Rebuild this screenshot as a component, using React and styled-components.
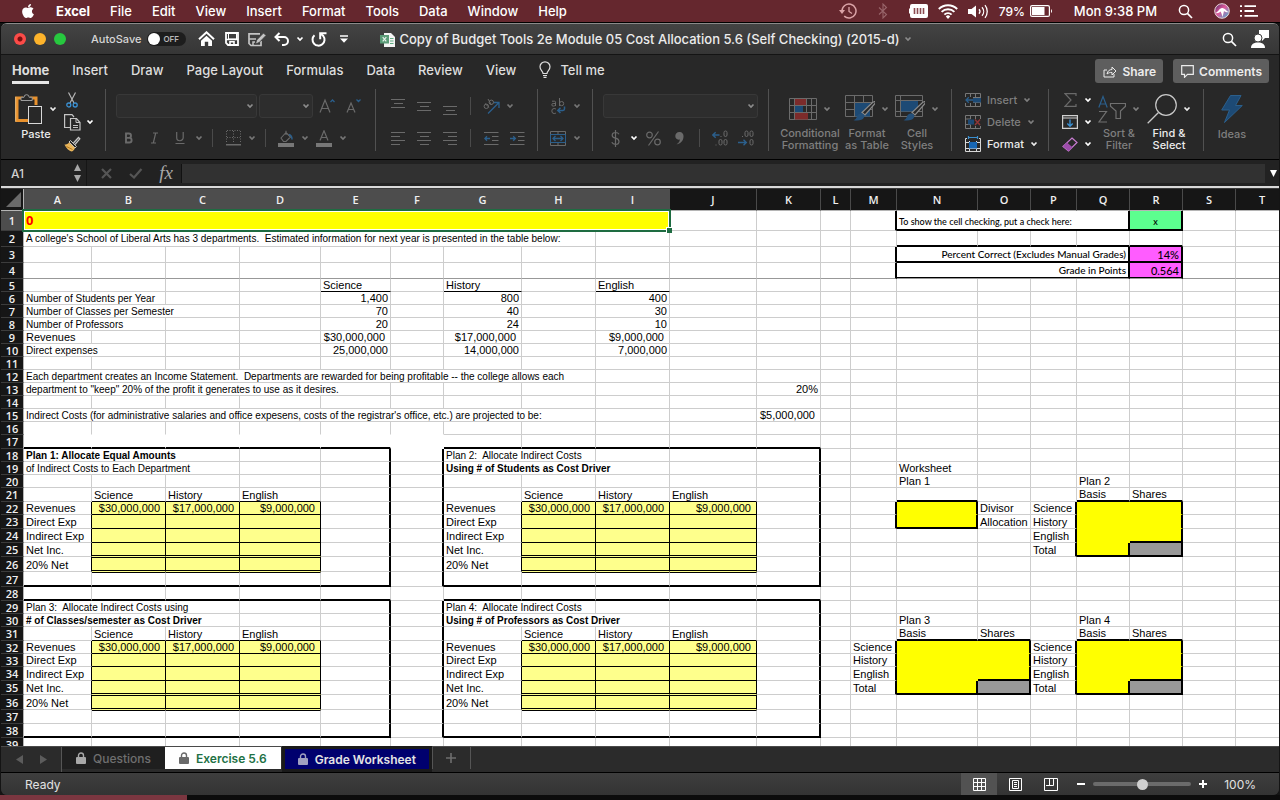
import React from "react";
import styled, { createGlobalStyle, css } from "styled-components";
import { FaApple } from "react-icons/fa";

const GlobalStyle = createGlobalStyle`
  * {
    box-sizing: border-box;
  }
  body {
    margin: 0;
    background: #141414;
    font-family: Inter, "Liberation Sans", sans-serif;
    color: #e2e2e2;
  }
  button,
  input,
  select {
    font: inherit;
    color: inherit;
    margin: 0;
    padding: 0;
    border: 0;
    background: none;
  }
  svg {
    display: block;
    flex: none;
  }
`;

const Screen = styled.div`
  height: 100vh;
  display: flex;
  flex-direction: column;
  overflow: hidden;
`;

/* ---------- menu bar ---------- */

const MenuBar = styled.nav`
  display: flex;
  align-items: center;
  flex: none;
  height: 23px;
  padding: 0 22px 0 20px;
  background: #65272e;
  border-bottom: 1px solid #000;
  color: #fff;
  font-size: 13px;
`;

const MenuList = styled.div`
  display: flex;
  align-items: center;
  gap: 20px;
  flex: 1;
`;

const MenuItem = styled.a`
  color: inherit;
  text-decoration: none;
  font-weight: ${(props) => (props.$app ? 700 : 500)};
`;

const MenuExtras = styled.div`
  display: flex;
  align-items: center;
  gap: 21px;
  font-weight: 500;
`;

const ExtrasCluster = styled.div`
  display: flex;
  align-items: center;
  gap: 10px;
`;

const Battery = styled.span`
  display: flex;
  align-items: center;
  gap: 5px;
  font-size: 12px;
`;

/* ---------- window ---------- */

const Window = styled.main`
  flex: 1;
  min-height: 0;
  display: flex;
  flex-direction: column;
  margin: 0 1px;
  overflow: hidden;
  background: #282828;
  border-top: 1px solid #8a8a8a;
  border-radius: 6px;
`;

const TitleBar = styled.header`
  display: flex;
  align-items: center;
  flex: none;
  height: 31px;
  padding: 0 7px 0 13px;
  background: linear-gradient(#434343, #363636);
  border-bottom: 1px solid #141414;
`;

const Lights = styled.div`
  display: flex;
  gap: 8px;
`;

const Light = styled.button`
  width: 12px;
  height: 12px;
  border-radius: 50%;
  background: ${(props) => props.$color};
`;

const AutoSave = styled.label`
  display: flex;
  align-items: center;
  gap: 6px;
  margin: 0 8px 0 25px;
  font-size: 11px;
  font-weight: 500;
  color: #d6d6d6;
`;

const Switch = styled.span`
  display: flex;
  align-items: center;
  gap: 3px;
  width: 39px;
  height: 14px;
  border-radius: 7px;
  background: #1d1d1d;
  font-size: 8px;
  font-weight: 600;
  color: #b8b8b8;

  input {
    appearance: none;
    width: 12px;
    height: 12px;
    margin-left: 1px;
    border-radius: 50%;
    background: #fff;
  }
`;

const QuickButton = styled.button`
  display: flex;
  justify-content: center;
  align-items: center;
  width: ${(props) => (props.$narrow ? 12 : props.$wide ? 36 : 25)}px;
  height: 24px;
  color: #fff;
`;

const DocTitle = styled.h1`
  display: flex;
  align-items: center;
  gap: 4px;
  flex: 1;
  margin: 0 0 0 24px;
  font-size: 13px;
  font-weight: 500;
  white-space: nowrap;
  color: #ececec;

  svg:last-child {
    color: #8a8a8a;
  }
`;

const TabRow = styled.div`
  display: flex;
  align-items: center;
  flex: none;
  height: 32px;
  padding: 0 10px 0 11px;
  font-size: 12px;
  font-weight: 600;
`;

const TabList = styled.div`
  display: flex;
  gap: 23px;
  flex: 1;
  font-size: 13px;
`;

const Tab = styled.button`
  display: flex;
  align-items: center;
  gap: 9px;
  height: 25px;
  color: #dedede;
  border-bottom: 3px solid ${(props) => (props.$active ? "#e6e6e6" : "transparent")};
  font-weight: ${(props) => (props.$active ? 700 : 500)};
`;

const ActionButton = styled.button`
  display: flex;
  align-items: center;
  justify-content: center;
  gap: 5px;
  height: 24px;
  padding: 0 7px 0 8px;
  margin-left: 10px;
  border-radius: 3px;
  background: #5e5e5e;
  color: #ececec;
`;

/* ---------- ribbon ---------- */

const Ribbon = styled.div`
  display: flex;
  flex: none;
  height: 73px;
  border-bottom: 1px solid #000;
`;

const Group = styled.section`
  display: flex;
  flex: none;
  width: ${(props) => props.$width}px;
  height: 62px;
  margin-top: 2px;
  padding-left: ${(props) => props.$pad || 9}px;
  border-right: ${(props) => (props.$last ? 0 : 1)}px solid #515151;
`;

const Stack = styled.div`
  display: flex;
  flex-direction: column;
  justify-content: ${(props) => (props.$tight ? "flex-start" : "space-between")};
  padding-top: ${(props) => (props.$tight ? 0 : 4)}px;
`;

const Line = styled.div`
  display: flex;
  align-items: center;
  flex: none;
  height: ${(props) => (props.$tight ? 22 : 26)}px;
`;

const Tool = styled.button`
  display: flex;
  justify-content: center;
  align-items: center;
  width: ${(props) => (props.$narrow ? 24 : 26)}px;
  height: 22px;
  color: ${(props) => (props.$on ? "#d0d0d0" : "#6a6a6a")};
`;

const Drop = styled.button`
  display: flex;
  justify-content: center;
  align-items: center;
  width: 12px;
  height: 22px;
  color: ${(props) => (props.$on ? "#fff" : "#767676")};
`;

const Divider = styled.span`
  width: 1px;
  height: 18px;
  margin: 0 7px;
  background: #4a4a4a;
`;

const Picker = styled.div`
  display: grid;
  align-items: center;
  width: ${(props) => props.$width}px;
  height: 24px;
  margin: 0 1px;
  border: 1px solid #383838;
  border-radius: 3px;
  background: #2d2d2d;
  color: #8c8c8c;

  > * {
    grid-area: 1 / 1;
  }
  select {
    appearance: none;
    width: 100%;
    height: 100%;
  }
  svg {
    justify-self: end;
    margin-right: 2px;
    pointer-events: none;
  }
`;

const BigTool = styled.button`
  display: flex;
  flex-direction: column;
  align-items: center;
  width: ${(props) => props.$width}px;
  padding-top: 4px;
  font-size: 11px;
  line-height: 12px;
  font-weight: 500;
  white-space: nowrap;
  color: ${(props) => (props.$on ? "#ececec" : "#7f7f7f")};
`;

const BigIcon = styled.span`
  display: flex;
  align-items: center;
  gap: 6px;
  height: 32px;
  margin-bottom: 3px;
`;

const CellTool = styled.button`
  display: flex;
  align-items: center;
  flex: none;
  gap: 6px;
  height: 22px;
  font-size: 11px;
  font-weight: 500;
  color: ${(props) => (props.$on ? "#ececec" : "#7f7f7f")};
`;

/* ---------- formula bar ---------- */

const FormulaBar = styled.div`
  display: flex;
  align-items: center;
  flex: none;
  height: 26px;
  background: #222;
`;

const NameBox = styled.div`
  display: flex;
  align-items: center;
  width: 86px;
  height: 26px;
  margin-right: 4px;
  padding: 0 5px 0 10px;
  border-right: 1px solid #161616;
  color: #d0d0d0;

  input {
    flex: 1;
    min-width: 0;
    font-size: 12px;
    font-weight: 500;
  }
`;

const Stepper = styled.span`
  display: flex;
  flex-direction: column;
  gap: 4px;
  color: #a8a8a8;
`;

const FormulaButton = styled.button`
  display: flex;
  justify-content: center;
  align-items: center;
  width: 30px;
  height: 22px;
  color: ${(props) => (props.$on ? "#a8a8a8" : "#555")};
  font-family: "Liberation Serif", serif;
  font-size: 19px;
  font-style: italic;
`;

const FormulaInput = styled.input`
  flex: 1;
  min-width: 0;
  height: 19px;
  margin-right: 2px;
  background: #313131;
  border-left: 1px solid #111;
`;

/* ---------- grid ---------- */

const GRID = "#cdcdcd";
const PALE = "#feff8c";

const Sheet = styled.div`
  flex: 1;
  min-height: 0;
  overflow: hidden;
  padding-top: 1px;
  background: #3a3a3a;
  border-top: 2px solid #d8d8d8;
`;

const Grid = styled.table`
  width: 100%;
  table-layout: fixed;
  border-collapse: separate;
  border-spacing: 0;
  color: #000;
  font-family: "Liberation Sans", Arial, sans-serif;
  font-size: 11px;
  line-height: 11px;
`;

const Row = styled.tr`
  height: ${(props) => props.$height}px;
`;

const Heading = styled.th`
  padding: 0;
  background: ${(props) => (props.$picked ? "#4d4d4d" : "#161616")};
  color: #f0f0f0;
  font-family: "Open Sans", "Noto Sans", sans-serif;
  font-size: 11px;
  font-weight: 600;
  vertical-align: middle;
  ${(props) =>
    props.scope === "col"
      ? css`
          border-right: 1px solid ${props.$picked ? "#4d4d4d" : "#4a4a4a"};
          border-bottom: 1px solid #b5b5b5;
        `
      : css`
          border-right: 1px solid #b5b5b5;
          border-bottom: 1px solid #3c3c3c;
        `}
`;

const Corner = styled.td`
  padding: 0 2px 3px 0;
  background: #161616;
  border-right: 1px solid #b5b5b5;
  border-bottom: 1px solid #b5b5b5;
  vertical-align: bottom;

  svg {
    margin-left: auto;
  }
`;

const lineStyle = (line, fill) => {
  if (line === "thick") return "2px solid #000";
  if (line === "thin") return "1px solid #000";
  if (line === "freeze" || line === "boxFreeze") return "1px solid #989898";
  if (line === "double") return `1px solid ${PALE}`;
  if (line === "none") return `1px solid ${fill || "#fff"}`;
  return `1px solid ${fill || GRID}`;
};

const faces = {
  prose: css`
    font-size: 10px;
  `,
  title: css`
    position: relative;
    color: #f00;
    font-family: "Open Sans", sans-serif;
    font-size: 13px;
    line-height: 17px;
  `,
  note: css`
    font: 500 9px/15px Lato, sans-serif;
    vertical-align: bottom;
  `,
  score: css`
    font: 500 10px/13px Lato, sans-serif;
  `,
  points: css`
    font: 500 11px/13px Lato, sans-serif;
  `,
};

const Cell = styled.td`
  padding: 0 2px;
  background: ${(props) => props.$fill || "#fff"};
  border-right: ${(props) => lineStyle(props.$right, props.$fill)};
  border-bottom: ${(props) => lineStyle(props.$bottom, props.$fill)};
  border-top: ${(props) => (props.$top ? "1px solid #000" : 0)};
  text-align: ${(props) => props.$align || "left"};
  vertical-align: ${(props) => (props.$middle ? "middle" : "bottom")};
  white-space: pre;
  ${(props) => props.$money && "padding-right: 5px;"}
  ${(props) => props.$bold && "font-weight: 700;"}
  ${(props) =>
    (props.$bottom === "double" || props.$bottom === "boxFreeze") &&
    "box-shadow: inset 0 -1px 0 #000;"}
  ${(props) => faces[props.$face]}
`;

const Selection = styled.span`
  position: absolute;
  inset: -2px;
  border: 2px solid #1e6c41;
  box-shadow: inset 0 0 0 1px #fff;

  &::after {
    content: "";
    position: absolute;
    right: -3px;
    bottom: -3px;
    width: 5px;
    height: 5px;
    background: #1e6c41;
    box-shadow: -1px -1px 0 #fff;
  }
`;

/* ---------- sheet tabs and status ---------- */

const SheetTabs = styled.div`
  display: flex;
  flex: none;
  height: 27px;
  background: #2b2b2b;
  border-top: 1px solid #4a4a4a;
  border-bottom: 1px solid #000;
`;

const TabArrows = styled.div`
  display: flex;
  align-items: center;
  width: 61px;
  padding-left: 6px;
  border-right: 1px solid #555;
`;

const TabArrow = styled.button`
  display: flex;
  align-items: center;
  justify-content: center;
  width: 24px;
  height: 22px;
  color: #5c5c5c;
`;

const sheetTabLook = {
  dim: css`
    background: #1f1f1f;
    color: #6f6f6f;
    font-weight: 500;
  `,
  open: css`
    background: #fff;
    color: #1e7145;
    font-weight: 600;
  `,
  navy: css`
    background: #00006e;
    color: #e4e4e4;
    font-weight: 600;
    outline: 3px solid #1a1a1a;
    margin: 2px 3px 0 4px;
  `,
};

const SheetTab = styled.button`
  display: flex;
  align-items: center;
  gap: 7px;
  height: ${(props) => (props.$look === "navy" ? 20 : 22)}px;
  padding: 0 ${(props) => (props.$look === "navy" ? 13 : 14)}px;
  font-size: 12px;
  white-space: nowrap;
  ${(props) => sheetTabLook[props.$look]}
`;

const AddTab = styled.button`
  display: flex;
  align-items: center;
  justify-content: center;
  width: 39px;
  height: 22px;
  border-left: 1px solid #555;
  border-right: 1px solid #555;
  color: #6e6e6e;
`;

const StatusBar = styled.footer`
  display: flex;
  align-items: center;
  flex: none;
  height: 22px;
  padding: 0 23px 0 24px;
  background: linear-gradient(#3e3e3e, #333);
  font-size: 12px;
`;

const StatusText = styled.span`
  flex: 1;
`;

const ViewButton = styled.button`
  display: flex;
  align-items: center;
  justify-content: center;
  width: 36px;
  height: 22px;
  background: ${(props) => (props.$active ? "#525252" : "none")};
  color: #fff;
`;

const ZoomButton = styled.button`
  display: flex;
  align-items: center;
  justify-content: center;
  width: 24px;
  height: 22px;
  color: #fff;
`;

const ZoomSlider = styled.input`
  appearance: none;
  width: 98px;
  height: 4px;
  border-radius: 2px;
  background: #6b6b6b;

  &::-webkit-slider-thumb {
    appearance: none;
    width: 11px;
    height: 11px;
    border-radius: 50%;
    background: #cfcfcf;
  }
`;

const ZoomValue = styled.output`
  margin-left: 9px;
`;

const Desktop = styled.div`
  flex: none;
  height: 5px;
  background: linear-gradient(90deg, #7b3640 0 187px, #0c0c0c 187px);
`;

/* ---------- icons ---------- */

const Icon = ({ w = 16, h = 16, box, children }) => (
  <svg
    width={w}
    height={h}
    viewBox={box || `0 0 ${w} ${h}`}
    fill="none"
    stroke="currentColor"
    aria-hidden="true"
  >
    {children}
  </svg>
);

const Chevron = () => (
  <Icon w={8} h={6}>
    <path d="M1.5 1.5 4 4l2.5-2.5" strokeWidth="1.7" />
  </Icon>
);

const BLUE = "#2b5f8c";

const LockIcon = ({ color }) => (
  <Icon w={10} h={12}>
    <rect x="0" y="5" width="10" height="7" rx="1" fill={color} stroke="none" />
    <path d="M2.5 6V3.500a2.500 2.500 0 0 1 5 0V6" stroke={color} strokeWidth="1.400" />
  </Icon>
);

const SearchIcon = () => (
  <Icon w={15} h={15}>
    <circle cx="6" cy="6" r="4.600" strokeWidth="1.500" />
    <path d="m9.400 9.400 4.600 4.600" strokeWidth="1.700" />
  </Icon>
);

const TimeMachineIcon = () => (
  <Icon w={18} h={16}>
    <path d="M3 8a7 7 0 1 1 2.200 5.100" stroke="#dba4a8" strokeWidth="1.500" />
    <path d="M0 7h6L3 11z" fill="#dba4a8" stroke="none" />
    <path d="M10 4v4.500l3 2" stroke="#dba4a8" strokeWidth="1.300" />
  </Icon>
);

const BluetoothIcon = () => (
  <Icon w={10} h={16}>
    <path d="m1 4.500 7.500 7L5 15V1l3.500 3.500-7.500 7" stroke="#98656a" strokeWidth="1.100" />
  </Icon>
);

const MemoryIcon = () => (
  <Icon w={19} h={14}>
    <path d="M3 0h14a2 2 0 0 1 2 2v10a2 2 0 0 1-2 2H3a2 2 0 0 1-2-2V9.500H0v-5h1V2a2 2 0 0 1 2-2z" fill="#fff" stroke="none" />
    <path d="M5.500 4v6M8.500 4v6M11.500 4v6M14.500 4v6" stroke="#8c4a50" strokeWidth="1.600" />
  </Icon>
);

const WifiIcon = () => (
  <Icon w={20} h={15}>
    <path d="M.8 5a13 13 0 0 1 18.400 0M3.600 7.900a9 9 0 0 1 12.800 0M6.400 10.700a5 5 0 0 1 7.200 0" strokeWidth="1.900" />
    <path d="m10 15-2.200-2.600a3 3 0 0 1 4.400 0z" fill="#fff" stroke="none" />
  </Icon>
);

const SoundIcon = () => (
  <Icon w={21} h={15}>
    <path d="M0 5h3.500L8 1.500v12L3.500 10H0z" fill="#fff" stroke="none" />
    <path d="M11 5.200a3.500 3.500 0 0 1 0 4.600M14 3.200a6.500 6.500 0 0 1 0 8.600M17 1.200a10 10 0 0 1 0 12.600" strokeWidth="1.300" />
  </Icon>
);

const BatteryIcon = () => (
  <Icon w={23} h={12}>
    <rect x=".6" y=".6" width="18.800" height="10.800" rx="1.500" strokeWidth="1.200" />
    <rect x="2" y="2" width="12.500" height="8" fill="#fff" stroke="none" />
    <path d="M21 4v4a2.500 2.500 0 0 0 0-4z" fill="#fff" stroke="none" />
  </Icon>
);

const SiriIcon = () => (
  <Icon w={16} h={16}>
    <defs>
      <linearGradient id="siri" x1="0" y1="0" x2="1" y2="1">
        <stop offset="0" stopColor="#4a2a66" />
        <stop offset=".45" stopColor="#e0589a" />
        <stop offset="1" stopColor="#38b6d8" />
      </linearGradient>
    </defs>
    <circle cx="8" cy="8" r="7.300" fill="url(#siri)" stroke="#e8d5d8" strokeWidth="1" />
    <path d="M1.500 10C4.500 9 5.500 4.500 8.500 5s3.500 3 6 4c-2.500.500-3.500 0-4.500-1-.500 2-1 4-1.500 6-.500-2-1-4-2-5.500-1.500 1.500-3 2-5 1.500z" fill="#fff" stroke="none" />
  </Icon>
);

const ListIcon = () => (
  <Icon w={18} h={12}>
    <path d="M0 1.200h2M4.500 1.200H16M0 6h2M4.500 6H14M0 10.800h2M4.500 10.800H18" strokeWidth="1.800" />
  </Icon>
);

const HomeIcon = () => (
  <Icon w={17} h={16}>
    <path d="M1 8.300 8.500 1.300l7.500 7" strokeWidth="2" />
    <path d="M3 9.800 8.500 4.700 14 9.800V15h-3.800v-4.200H6.800V15H3z" fill="#fff" stroke="none" />
  </Icon>
);

const SaveIcon = () => (
  <Icon w={14} h={14}>
    <path d="M1 1h12v12H3l-2-2z" strokeWidth="1.800" />
    <path d="M1.500 1.500h2V7h8V1.500" strokeWidth="1" />
    <path d="M1 7.500h12" strokeWidth="1.600" />
    <path d="M5 13V9.800h4V13" strokeWidth="1.600" />
  </Icon>
);

const SaveAsIcon = () => (
  <Icon w={18} h={15}>
    <path d="M12 1.800H1v9.700L3 13.500h10V9" stroke="#c4c4c4" strokeWidth="1.700" />
    <path d="M1 7h7M5 13v-3h2" stroke="#c4c4c4" strokeWidth="1.500" />
    <path d="m7.500 12 1.200-4L15.500 1l2.500 2.500-6.800 7z" fill="#c4c4c4" stroke="#3c3c3c" strokeWidth=".8" />
  </Icon>
);

const UndoIcon = () => (
  <Icon w={16} h={14}>
    <path d="M5.500 1 1.500 5l4 4" strokeWidth="2" />
    <path d="M1.500 5H10a4 4 0 0 1 0 8H8" strokeWidth="2" />
  </Icon>
);

const RedoIcon = () => (
  <Icon w={16} h={15}>
    <path d="M3.500 3.200A6 6 0 1 0 12.300 4L9.500 1.500" strokeWidth="2" />
    <path d="M15.500 1.200H9.200v6" strokeWidth="2" />
  </Icon>
);

const MoreIcon = () => (
  <Icon w={8} h={8}>
    <path d="M0 1h8" strokeWidth="1.400" />
    <path d="M0 3.500h8L4 7.800z" fill="#fff" stroke="none" />
  </Icon>
);

const FileIcon = () => (
  <Icon w={15} h={15}>
    <path d="M4 1h7l4 4v10H4z" fill="#f4f4f4" stroke="none" />
    <path d="M10 6.500h3.500M10 9h3.500M10 11.500h3.500" stroke="#5fae83" />
    <rect x="0" y="3" width="9" height="8.500" fill="#5b9c78" stroke="none" />
    <path d="m2.700 5.200 3.600 4.200M6.300 5.200 2.700 9.400" stroke="#e6f2ea" strokeWidth="1.200" />
  </Icon>
);

const PersonIcon = () => (
  <Icon w={18} h={18}>
    <path d="M8 0h10v8h-4l-3 3V8H8z" fill="#fff" stroke="none" />
    <circle cx="7" cy="8" r="4" fill="#fff" stroke="#3c3c3c" />
    <path d="M0 18c0-4 3-5.500 7-5.500s7 1.500 7 5.500z" fill="#fff" stroke="none" />
  </Icon>
);

const BulbIcon = () => (
  <Icon w={12} h={17}>
    <path d="M4 12.500c0-2.500-3-3-3-6.700a5 5 0 0 1 10 0c0 3.700-3 4.200-3 6.700zM4 14.500h4M4.500 16.300h3" strokeWidth="1.200" />
  </Icon>
);

const ShareIcon = () => (
  <Icon w={14} h={13}>
    <path d="M4 5H1v7h10V9" />
    <path d="M4 9c.5-3 2.500-4.500 5-4.500V2l4 4-4 4V7.500C7 7.300 5.500 7.800 4 9z" />
  </Icon>
);

const CommentIcon = () => (
  <Icon w={13} h={13}>
    <path d="M.7.7h11.600v8.600H6.500l-3 3v-3H.7z" strokeWidth="1.200" />
  </Icon>
);

const PasteIcon = () => (
  <Icon w={28} h={32}>
    <path d="M8 5H2v22.500h11" stroke="#e8912d" strokeWidth="3" />
    <path d="M15 5h6v7" stroke="#e8912d" strokeWidth="3" />
    <path d="M.7 28.700V3.700" stroke="#f3c27a" />
    <path d="M6 7.500V4.300h3a2.600 2.600 0 0 1 5.200 0h3v3.200z" fill="#282828" stroke="#9c9c9c" />
    <rect x="13.500" y="13.500" width="13" height="17" fill="#282828" stroke="#d8d8d8" />
  </Icon>
);

const CutIcon = () => (
  <Icon w={12} h={16}>
    <path d="M2.500.5 8 11M9.500.5 4 11" stroke="#b4b4b4" strokeWidth="1.200" />
    <circle cx="2.800" cy="13" r="2" stroke="#3a8fd0" strokeWidth="1.300" />
    <circle cx="9.200" cy="13" r="2" stroke="#3a8fd0" strokeWidth="1.300" />
  </Icon>
);

const CopyIcon = () => (
  <Icon w={17} h={17}>
    <path d="M6 13.500H.6V.6H8L10 3" stroke="#c4c4c4" strokeWidth="1.200" />
    <path d="M6.500 4.500h6l3.500 4v7.500H6.500z" fill="#282828" stroke="#c4c4c4" strokeWidth="1.200" />
    <path d="M12 4.500v4h4M9 11.500h5M9 13.500h5" stroke="#c4c4c4" />
  </Icon>
);

const BrushIcon = () => (
  <Icon w={17} h={16}>
    <path d="m9.500 7 5-5.500 1.300 1.300L11 8.500" stroke="#c4c4c4" strokeWidth="1.300" />
    <path d="m6.500 4.500 6 6-1.500 1.500-6-6z" fill="#282828" stroke="#c4c4c4" />
    <path d="M5 6.500c-1 1.500-2.500 2-4.500 2C2 12 5 15 8 15.500c1.500-1 2.500-2 3-3.500z" fill="#e8b45a" stroke="none" />
    <path d="m2.500 10.500 6 3" stroke="#b87a1e" />
  </Icon>
);

const FontSizeIcon = ({ up }) => (
  <Icon w={16} h={16}>
    <path d={up ? "M1 14.500 6 2l5 12.500M2.800 10.500h6.400" : "M2 14.500 6 5l4 9.500M3.300 11.500h5.400"} strokeWidth="1.200" />
    <path d={up ? "m11.500 4 2-2 2 2" : "m11.500 1.500 2 2 2-2"} stroke={BLUE} strokeWidth="1.300" />
  </Icon>
);

const BoldIcon = () => (
  <Icon w={9} h={12}>
    <path d="M2 1.500h2.800a2.200 2.200 0 0 1 0 4.400H2zM2 5.900h3.300a2.300 2.300 0 0 1 0 4.600H2z" strokeWidth="1.900" />
  </Icon>
);

const ItalicIcon = () => (
  <Icon w={9} h={12}>
    <path d="M3 1h5M1 11h5M5.700 1 3.300 11" strokeWidth="1.200" />
  </Icon>
);

const UnderlineIcon = () => (
  <Icon w={10} h={14}>
    <path d="M1.700 1v5.500a3.200 3.200 0 0 0 6.500 0V1M.5 12.500h9" strokeWidth="1.200" />
  </Icon>
);

const BordersIcon = () => (
  <Icon w={15} h={16}>
    <path d="M.5 1v12M14.500 1v12M7.500 1v12M1 .5h13M1 7.500h13" strokeDasharray="1 1.500" />
    <path d="M0 14.700h15" strokeWidth="1.400" />
  </Icon>
);

const FillIcon = () => (
  <Icon w={16} h={17}>
    <path d="m3 8 5-5.500L12.500 7 8 11.500H5.500zM8 5V.8" strokeWidth="1.100" />
    <path d="M11 4.500c2 .5 3 2 3 5" stroke={BLUE} strokeWidth="1.500" />
    <rect x="0" y="13" width="16" height="4" fill="#777" stroke="none" />
  </Icon>
);

const FontColorIcon = () => (
  <Icon w={16} h={17}>
    <path d="M4 10.500 8 .8l4 9.700M5.400 7.500h5.200" strokeWidth="1.200" />
    <rect x="0" y="13" width="16" height="4" fill="#777" stroke="none" />
  </Icon>
);

const linePaths = {
  top: "M0 2.500h14M3 6.500h9M0 10.500h14",
  middle: "M0 5.500h14M3 9.500h9M0 13.500h14",
  bottom: "M0 9.500h14M3 13.500h9M0 17.500h14",
  left: "M0 1.500h14M0 5.500h9M0 9.500h14M0 13.500h9",
  center: "M0 1.500h14M3 5.500h9M0 9.500h14M3 13.500h9",
  right: "M0 1.500h14M5 5.500h9M0 9.500h14M5 13.500h9",
};

const LinesIcon = ({ kind }) => {
  const tall = ["top", "middle", "bottom"].includes(kind);
  return (
    <Icon w={14} h={tall ? 18 : 15}>
      <path d={linePaths[kind]} />
    </Icon>
  );
};

const OrientIcon = () => (
  <Icon w={17} h={16}>
    <path d="M5 15.500 15.500 5M10.500 4.500H16V10" stroke={BLUE} strokeWidth="1.300" />
    <circle cx="3.300" cy="8.300" r="2.200" />
    <path d="m2 5.500 4.200 4" />
    <circle cx="8.300" cy="4.300" r="2.200" />
    <path d="m5 1 3.500 6" />
  </Icon>
);

const IndentIcon = ({ out }) => (
  <Icon w={15} h={15}>
    <path d="M0 1.500h14.500M8 5.500h6.500M8 9.500h6.500M0 13.500h14.500" />
    <path d={out ? "M6 7.500H1M3 5.200.8 7.500 3 9.800" : "M0 7.500h5M3.200 5.200l2.200 2.300-2.200 2.300"} stroke={BLUE} strokeWidth="1.300" />
  </Icon>
);

const WrapIcon = () => (
  <Icon w={15} h={17}>
    <path d="M1 3.200h2.500q1 0 1 1V8M4.500 5.500H2.200q-1.400 0-1.400 1.300t1.400 1.300q1.500 0 2.300-1.200M8.500 0v8" />
    <circle cx="10.600" cy="5.600" r="2.100" />
    <path d="M5 11.200Q4.300 10.500 3.200 10.500.8 10.500.8 13t2.400 2.600q1.100 0 1.800-.7" />
    <path d="M13.500 8.500v2.300q0 1.700-1.500 1.700H7M9.500 9.800 6.800 12.500 9.500 15" stroke={BLUE} strokeWidth="1.500" />
  </Icon>
);

const MergeIcon = () => (
  <Icon w={16} h={15}>
    <path d="M.5.500h15v14H.5zM8 .5V4M8 11v3.500" />
    <path d="M.5 3.500h15v8H.5z" stroke={BLUE} />
    <path d="M3 7.500h10M5.500 5 3 7.500 5.500 10M10.500 5 13 7.500 10.500 10" stroke={BLUE} strokeWidth="1.300" />
  </Icon>
);

const DollarIcon = () => (
  <Icon w={9} h={17}>
    <path d="M4.500 0v17M8 4.300Q7 2.500 4.500 2.500 1.200 2.500 1.200 5.200q0 2.300 3.300 3T8 11.500q0 2.900-3.500 2.900Q1.800 14.400.8 12.300" strokeWidth="1.200" />
  </Icon>
);

const PercentIcon = () => (
  <Icon w={15} h={15}>
    <circle cx="3.500" cy="4" r="2.800" strokeWidth="1.200" />
    <circle cx="11.500" cy="11" r="2.800" strokeWidth="1.200" />
    <path d="M12.500.500 2.500 14.500" strokeWidth="1.200" />
  </Icon>
);

const CommaIcon = () => (
  <Icon w={9} h={13}>
    <path d="M4.200 0A4 4 0 0 1 8.500 4.500C8.500 9 5.500 11.500 1.500 12.500c2-1.500 3.300-3 3.300-5C2 8.200.3 6.300.3 4A3.900 3.900 0 0 1 4.200 0z" fill="currentColor" stroke="none" />
  </Icon>
);

const DecimalIcon = ({ less }) => (
  <Icon w={16} h={16}>
    <rect x="12" y="1" width="3" height="5.500" rx="1.500" />
    {less && <rect x="7" y="1" width="3" height="5.500" rx="1.500" />}
    <rect x="12" y="9.500" width="3" height="5.500" rx="1.500" />
    {!less && <rect x="7" y="9.500" width="3" height="5.500" rx="1.500" />}
    <path d={less ? "M4.500 6v1" : "M4 14.500v1M9 6v1"} />
    <path d={less ? "M0 12.500h8M5.500 9.800 8.300 12.500l-2.800 2.700" : "M7.500 5H1M3.700 2.200.8 5l2.900 2.800"} stroke={BLUE} strokeWidth="1.400" />
  </Icon>
);

const PaintBrush = () => (
  <>
    <path d="M29.500 6.500c1 0 1 1 .5 2L20 20l-3-2.500L27.500 7.500z" fill="#282828" stroke="#8a8a8a" strokeWidth="1.200" />
    <path d="M16.500 18.500c2 0 3.500 2 2.500 4-1.500 3-6 3.500-10.500 2.700 3-1.200 3-3 4-5 .8-1.200 2-1.700 4-1.700z" fill="#24507a" stroke="none" />
  </>
);

const ConditionalIcon = () => (
  <Icon w={28} h={24}>
    <path d="M.5 1.500h27v21H.5zM.5 8.500h27M.5 15.500h27M5.500 1.500v21M17.500 1.500v21M22.500 1.500v21" stroke="#6b6b6b" />
    <path d="M6 2h11v6H6zM6 16h13v6.500H6z" fill="#7c2b2b" stroke="none" />
    <rect x="6" y="9" width="8" height="6" fill="#1d4a75" stroke="none" />
    <rect x="14" y="9" width="3" height="6" fill="#282828" stroke="none" />
  </Icon>
);

const FormatTableIcon = () => (
  <Icon w={30} h={27}>
    <path d="M.5.500h27v21H.5zM.5 7.500h27M.5 14.500h27M9.500.5v21M18.500.5v21" stroke="#6b6b6b" />
    <path d="M10 8h15v13.500H10z" fill="#1d4a75" stroke="none" />
    <PaintBrush />
  </Icon>
);

const CellStylesIcon = () => (
  <Icon w={30} h={27}>
    <path d="M.5.500h27v21H.5zM.5 5.500h27M.5 16.500h27M5.500.5v21" stroke="#6b6b6b" />
    <path d="M6 6h17v10.500H6z" fill="#1d4a75" stroke="none" />
    <PaintBrush />
  </Icon>
);

const InsertCellsIcon = () => (
  <Icon w={16} h={14}>
    <path d="M.5 4V.500h15v13H.5V10M5.500.5V4M10.500.5v13M5.500 10v3.500M8 9.500h7.500M8 4.500h7.500" stroke="#777" />
    <rect x="8" y="5" width="8" height="4.500" fill="#1d4a75" stroke="none" />
    <path d="M8 7H1M3.800 4.200 1 7l2.800 2.800" stroke={BLUE} strokeWidth="1.300" />
  </Icon>
);

const DeleteCellsIcon = () => (
  <Icon w={16} h={14}>
    <path d="M.5.500h15V4M.5.500V4h5V.5M10.500.5V4M.5 13.500V9.500h5v4zM5.500 13.500h10V11M10.500 11v2.500M.5 4v6" stroke="#777" />
    <rect x="3" y="4.500" width="6" height="5" fill="#1d4a75" stroke="none" />
    <path d="m10 4.500 5 5.500M15 4.500 10 10" stroke="#8f3535" strokeWidth="1.500" />
  </Icon>
);

const FormatCellsIcon = () => (
  <Icon w={16} h={16}>
    <path d="M3.500 1.500h9M3.500 0v3M12.500 0v3" stroke="#3a8fd0" strokeWidth="1.200" />
    <path d="M2 2.500H.5v13h15v-13H14M4.500 5v10.500M11.500 5v10.500M.5 6.500h15M.5 12.500h15" stroke="#d8d8d8" />
    <rect x="4" y="6" width="8" height="6.500" fill="#1766b3" stroke="none" />
  </Icon>
);

const SumIcon = () => (
  <Icon w={13} h={14}>
    <path d="M12 3V.700H1l6 6.300-6 6.300h11V11" strokeWidth="1.200" />
  </Icon>
);

const FillDownIcon = () => (
  <Icon w={16} h={14}>
    <path d="M.6.600h14.800v12.800H.6zM.6 3h14.800" strokeWidth="1.200" />
    <path d="M8 4.500V11M5.300 8.500 8 11.200l2.700-2.700" stroke="#3a8fd0" strokeWidth="1.400" />
  </Icon>
);

const EraserIcon = () => (
  <Icon w={16} h={15}>
    <path d="M10 1 15 5.500 6.500 14 1 9.500z" stroke="#c77bd0" strokeWidth="1.200" />
    <path d="M5 5.500 10.500 10.200 6.500 14 1 9.500z" fill="#9d4cab" stroke="none" />
  </Icon>
);

const SortIcon = () => (
  <Icon w={28} h={28}>
    <path d="M.8 12.500 5 1.500l4.200 11M2.300 9h5.400" stroke={BLUE} strokeWidth="1.200" />
    <path d="M1 16.500h7.500L1 27h8" stroke="#707070" strokeWidth="1.200" />
    <path d="M12.500 8.500h15v2.800L22.500 16v7.500h-4.500V16l-5.500-4.700z" stroke="#707070" strokeWidth="1.200" />
  </Icon>
);

const FindIcon = () => (
  <Icon w={30} h={30}>
    <circle cx="19" cy="11" r="10.300" stroke="#c8c8c8" strokeWidth="1.200" />
    <path d="M11.500 18.500.7 29.300" stroke="#c8c8c8" strokeWidth="1.300" />
  </Icon>
);

const BoltIcon = () => (
  <Icon w={22} h={28}>
    <path d="M9.500.500h10.500L14.500 10.500h6.800L3.500 27.500l5-12.500H.7z" fill="#1d4a75" stroke="#2b5f8c" />
  </Icon>
);

const Arrow = ({ to }) => {
  const shapes = {
    up: "M0 7 3.500 0 7 7z",
    down: "M0 0h7L3.500 7z",
    left: "M7 0v9L0 4.500z",
    right: "M0 0v9l7-4.500z",
  };
  return (
    <Icon w={7} h={to === "up" || to === "down" ? 7 : 9}>
      <path d={shapes[to]} fill="currentColor" stroke="none" />
    </Icon>
  );
};

/* ---------- sheet data ---------- */

const columns = [
  ["A", 68],
  ["B", 74],
  ["C", 74],
  ["D", 81],
  ["E", 70],
  ["F", 53],
  ["G", 78],
  ["H", 74],
  ["I", 74],
  ["J", 87],
  ["K", 64],
  ["L", 30],
  ["M", 46],
  ["N", 81],
  ["O", 53],
  ["P", 46],
  ["Q", 53],
  ["R", 53],
  ["S", 53],
  ["T", 53],
];
const names = columns.map(([name]) => name);

const rowHeights = [
  20, 16, 16, 16, 13, 13, 13, 13, 13, 13, 13, 13, 13, 13, 13, 13, 14, 13, 13,
  13, 14, 13, 14, 14, 14, 15, 15, 14, 13, 13, 14, 13, 13, 14, 14, 15, 14, 14,
  13,
];

const cells = {};

const put = (ref, props) => {
  cells[ref] = { ...cells[ref], ...props };
};

const eachCell = (c1, r1, c2, r2, fn) => {
  for (let c = names.indexOf(c1); c <= names.indexOf(c2); c++) {
    for (let r = r1; r <= r2; r++) fn(names[c], r);
  }
};

const outline = (c1, r1, c2, r2) => {
  const before = names[names.indexOf(c1) - 1];
  eachCell(c1, r1, c2, r2, (c, r) => {
    if (r === r1) put(c + (r - 1), { bottom: "thick" });
    if (r === r2) put(c + r, { bottom: "thick" });
    if (c === c2) put(c + r, { right: "thick" });
    if (c === c1 && before) put(before + r, { right: "thick" });
  });
};

const fill = (c1, r1, c2, r2, color) =>
  eachCell(c1, r1, c2, r2, (c, r) => put(c + r, { fill: color }));

// Text cells: reference, text, number of columns the text runs over.
const labels = [
  ["A2", "A college's School of Liberal Arts has 3 departments.  Estimated information for next year is presented in the table below:", 8],
  ["E5", "Science"],
  ["G5", "History"],
  ["I5", "English"],
  ["A6", "Number of Students per Year", 2],
  ["A7", "Number of Classes per Semester", 3],
  ["A8", "Number of Professors", 2],
  ["A9", "Revenues"],
  ["A10", "Direct expenses", 2],
  ["A12", "Each department creates an Income Statement.  Departments are rewarded for being profitable -- the college allows each", 8],
  ["A13", 'department to "keep" 20% of the profit it generates to use as it desires.', 5],
  ["A15", "Indirect Costs (for administrative salaries and office expesens, costs of the registrar's office, etc.) are projected to be:", 8],
  ["A18", "Plan 1: Allocate Equal Amounts", 3],
  ["A19", "of Indirect Costs to Each Department", 3],
  ["G18", "Plan 2:  Allocate Indirect Costs", 2],
  ["G19", "Using # of Students as Cost Driver", 3],
  ["A29", "Plan 3:  Allocate Indirect Costs using", 3],
  ["A30", "# of Classes/semester as Cost Driver", 3],
  ["G29", "Plan 4:  Allocate Indirect Costs", 2],
  ["G30", "Using # of Professors as Cost Driver", 3],
  ["N19", "Worksheet"],
  ["N20", "Plan 1"],
  ["Q20", "Plan 2"],
  ["Q21", "Basis"],
  ["R21", "Shares"],
  ["O22", "Divisor"],
  ["O23", "Allocation"],
  ["N30", "Plan 3"],
  ["N31", "Basis"],
  ["O31", "Shares"],
  ["Q30", "Plan 4"],
  ["Q31", "Basis"],
  ["R31", "Shares"],
];
labels.forEach(([ref, text, span]) =>
  put(ref, { text, span, face: span && "prose" })
);
["A18", "G19", "A30", "G30"].forEach((ref) => put(ref, { bold: true }));

const facts = [
  ["E", "1,400", "70", "20", "$30,000,000", "25,000,000"],
  ["G", "800", "40", "24", "$17,000,000", "14,000,000"],
  ["I", "400", "30", "10", "$9,000,000", "7,000,000"],
];
facts.forEach(([col, ...values]) => {
  put(`${col}5`, { bottom: "thin" });
  values.forEach((text, i) =>
    put(col + (6 + i), { text, align: "right", money: text[0] === "$" })
  );
});
put("K13", { text: "20%", align: "right" });
put("K15", { text: "$5,000,000", align: "right", money: true });

// Frozen rows end below row 4.
names.forEach((name) => put(`${name}4`, { bottom: "freeze" }));

// The strip above the first plan box has no grid lines.
eachCell("A", 16, "F", 16, (c, r) => put(c + r, { bottom: "none" }));
eachCell("A", 17, "F", 17, (c, r) => put(c + r, { right: "none", bottom: "none" }));

const planTable = (labelCol, headRow) => {
  const at = names.indexOf(labelCol);
  const cols = names.slice(at + 1, at + 4);
  ["Revenues", "Direct Exp", "Indirect Exp", "Net Inc.", "20% Net"].forEach(
    (text, i) => put(labelCol + (headRow + 1 + i), { text, right: "thin" })
  );
  cols.forEach((col, i) => {
    put(col + headRow, { text: ["Science", "History", "English"][i], bottom: "thin" });
    for (let r = 1; r <= 5; r++) {
      put(col + (headRow + r), {
        fill: PALE,
        right: "thin",
        bottom: r > 3 ? "double" : "thin",
        top: r === 5,
      });
    }
    put(col + (headRow + 1), {
      text: ["$30,000,000", "$17,000,000", "$9,000,000"][i],
      align: "right",
      money: true,
    });
    put(col + (headRow + 6), { top: true });
  });
};

outline("A", 18, "E", 27);
outline("G", 18, "K", 27);
outline("A", 29, "E", 38);
outline("G", 29, "K", 38);
planTable("A", 21);
planTable("G", 21);
planTable("A", 31);
planTable("G", 31);

const driverBox = (c1, c2, row) => {
  const labelCol = names[names.indexOf(c1) - 1];
  ["Science", "History", "English", "Total"].forEach((text, i) =>
    put(labelCol + (row + i), { text })
  );
  fill(c1, row, c2, row + 3, "#ffff00");
  outline(c1, row, c2, row + 3);
  fill(c2, row + 3, c2, row + 3, "#999999");
  outline(c2, row + 3, c2, row + 3);
};

fill("N", 22, "N", 23, "#ffff00");
outline("N", 22, "N", 23);
driverBox("Q", "R", 22);
driverBox("N", "O", 32);
driverBox("Q", "R", 32);

put("A1", { text: "0", span: 9, fill: "#ffff00", bold: true, face: "title", selected: true });
put("M1", { right: "thick" });
put("N1", { text: "To show the cell checking, put a check here:", span: 4, face: "note", bottom: "thick" });
put("Q1", { right: "thick" });
put("R1", { text: "x", fill: "#5cff8f", align: "center", face: "note", right: "thick", bottom: "thick" });
outline("N", 3, "R", 3);
put("M4", { right: "thick" });
put("N3", { text: "Percent Correct (Excludes Manual Grades)", span: 4, face: "score", align: "right" });
put("N4", { text: "Grade in Points", span: 4, face: "score", align: "right", bottom: "boxFreeze" });
put("Q3", { right: "thick" });
put("Q4", { right: "thick" });
put("R3", { text: "14%", fill: "#ff5cff", face: "points", align: "right" });
put("R4", { text: "0.564", fill: "#ff5cff", face: "points", align: "right", right: "thick", bottom: "boxFreeze" });

const SheetRow = ({ number, height }) => {
  const out = [];
  for (let c = 0; c < names.length; ) {
    const cell = cells[names[c] + number] || {};
    const span = cell.span || 1;
    const last = cells[names[c + span - 1] + number] || {};
    out.push(
      <Cell
        key={names[c]}
        colSpan={span}
        $fill={cell.fill}
        $right={last.right}
        $bottom={cell.bottom}
        $top={cell.top}
        $align={cell.align}
        $money={cell.money}
        $bold={cell.bold}
        $face={cell.face}
        $middle={number < 5}
      >
        {cell.text}
        {cell.selected && <Selection />}
      </Cell>
    );
    c += span;
  }
  return (
    <Row $height={height}>
      <Heading scope="row" $picked={number === 1}>
        {number}
      </Heading>
      {out}
    </Row>
  );
};

/* ---------- page ---------- */

const menus = ["File", "Edit", "View", "Insert", "Format", "Tools", "Data", "Window", "Help"];
const ribbonTabs = ["Home", "Insert", "Draw", "Page Layout", "Formulas", "Data", "Review", "View"];

const DropDown = ({ label, on }) => (
  <Drop $on={on} aria-label={label}>
    <Chevron />
  </Drop>
);

const HomeRibbon = () => (
  <Ribbon>
    <Group $width={105} $pad={11}>
      <BigTool $width={48} $on>
        <BigIcon>
          <PasteIcon />
          <Chevron />
        </BigIcon>
        Paste
      </BigTool>
      <Stack $tight>
        <Line $tight>
          <Tool $narrow $on aria-label="Cut"><CutIcon /></Tool>
        </Line>
        <Line $tight>
          <Tool $narrow $on aria-label="Copy"><CopyIcon /></Tool>
          <DropDown label="Copy options" on />
        </Line>
        <Line $tight>
          <Tool $narrow $on aria-label="Format painter"><BrushIcon /></Tool>
        </Line>
      </Stack>
    </Group>

    <Group $width={270}>
      <Stack>
        <Line>
          <Picker $width={141}>
            <select aria-label="Font" disabled />
            <Chevron />
          </Picker>
          <Picker $width={54}>
            <select aria-label="Font size" disabled />
            <Chevron />
          </Picker>
          <Tool aria-label="Increase font size"><FontSizeIcon up /></Tool>
          <Tool aria-label="Decrease font size"><FontSizeIcon /></Tool>
        </Line>
        <Line>
          <Tool aria-label="Bold"><BoldIcon /></Tool>
          <Tool aria-label="Italic"><ItalicIcon /></Tool>
          <Tool aria-label="Underline"><UnderlineIcon /></Tool>
          <DropDown label="Underline options" />
          <Divider />
          <Tool aria-label="Borders"><BordersIcon /></Tool>
          <DropDown label="Border options" />
          <Divider />
          <Tool aria-label="Fill color"><FillIcon /></Tool>
          <DropDown label="Fill color options" />
          <Tool aria-label="Font color"><FontColorIcon /></Tool>
          <DropDown label="Font color options" />
        </Line>
      </Stack>
    </Group>

    <Group $width={162}>
      <Stack>
        <Line>
          <Tool aria-label="Top align"><LinesIcon kind="top" /></Tool>
          <Tool aria-label="Middle align"><LinesIcon kind="middle" /></Tool>
          <Tool aria-label="Bottom align"><LinesIcon kind="bottom" /></Tool>
          <Divider />
          <Tool aria-label="Orientation"><OrientIcon /></Tool>
          <DropDown label="Orientation options" />
        </Line>
        <Line>
          <Tool aria-label="Align left"><LinesIcon kind="left" /></Tool>
          <Tool aria-label="Center"><LinesIcon kind="center" /></Tool>
          <Tool aria-label="Align right"><LinesIcon kind="right" /></Tool>
          <Divider />
          <Tool aria-label="Decrease indent"><IndentIcon out /></Tool>
          <Tool aria-label="Increase indent"><IndentIcon /></Tool>
        </Line>
      </Stack>
    </Group>

    <Group $width={55} $pad={7}>
      <Stack>
        <Line>
          <Tool aria-label="Wrap text"><WrapIcon /></Tool>
          <DropDown label="Wrap options" />
        </Line>
        <Line>
          <Tool aria-label="Merge and center"><MergeIcon /></Tool>
          <DropDown label="Merge options" />
        </Line>
      </Stack>
    </Group>

    <Group $width={176}>
      <Stack>
        <Line>
          <Picker $width={155}>
            <select aria-label="Number format" disabled />
            <Chevron />
          </Picker>
        </Line>
        <Line>
          <Tool aria-label="Accounting format"><DollarIcon /></Tool>
          <DropDown label="Accounting options" on />
          <Tool aria-label="Percent style"><PercentIcon /></Tool>
          <Tool aria-label="Comma style"><CommaIcon /></Tool>
          <Divider />
          <Tool aria-label="Increase decimal"><DecimalIcon /></Tool>
          <Tool aria-label="Decrease decimal"><DecimalIcon less /></Tool>
        </Line>
      </Stack>
    </Group>

    <Group $width={183} $pad={10}>
      <BigTool $width={62}>
        <BigIcon><ConditionalIcon /><Chevron /></BigIcon>
        Conditional<br />Formatting
      </BigTool>
      <BigTool $width={52}>
        <BigIcon><FormatTableIcon /><Chevron /></BigIcon>
        Format<br />as Table
      </BigTool>
      <BigTool $width={48}>
        <BigIcon><CellStylesIcon /><Chevron /></BigIcon>
        Cell<br />Styles
      </BigTool>
    </Group>

    <Group $width={97} $pad={13}>
      <Stack $tight>
        <CellTool><InsertCellsIcon />Insert<Chevron /></CellTool>
        <CellTool><DeleteCellsIcon />Delete<Chevron /></CellTool>
        <CellTool $on><FormatCellsIcon />Format<Chevron /></CellTool>
      </Stack>
    </Group>

    <Group $width={155}>
      <Stack $tight>
        <Line $tight>
          <Tool $narrow aria-label="AutoSum"><SumIcon /></Tool>
          <DropDown label="AutoSum options" on />
        </Line>
        <Line $tight>
          <Tool $narrow $on aria-label="Fill"><FillDownIcon /></Tool>
          <DropDown label="Fill options" on />
        </Line>
        <Line $tight>
          <Tool $narrow $on aria-label="Clear"><EraserIcon /></Tool>
          <DropDown label="Clear options" on />
        </Line>
      </Stack>
      <BigTool $width={50}>
        <BigIcon><SortIcon /><Chevron /></BigIcon>
        Sort &amp;<br />Filter
      </BigTool>
      <BigTool $width={50} $on>
        <BigIcon><FindIcon /><Chevron /></BigIcon>
        Find &amp;<br />Select
      </BigTool>
    </Group>

    <Group $width={60} $pad={4} $last>
      <BigTool $width={48}>
        <BigIcon><BoltIcon /></BigIcon>
        Ideas
      </BigTool>
    </Group>
  </Ribbon>
);

const App = () => {
  return (
    <Screen>
      <GlobalStyle />
      <MenuBar>
        <MenuList>
          <FaApple size={16} />
          <MenuItem href="#" $app>Excel</MenuItem>
          {menus.map((name) => (
            <MenuItem href="#" key={name}>{name}</MenuItem>
          ))}
        </MenuList>
        <MenuExtras>
          <TimeMachineIcon />
          <BluetoothIcon />
          <ExtrasCluster>
            <MemoryIcon />
            <WifiIcon />
            <SoundIcon />
            <Battery>79% <BatteryIcon /></Battery>
          </ExtrasCluster>
          <span>Mon 9:38 PM</span>
          <SearchIcon />
          <ExtrasCluster>
            <SiriIcon />
            <ListIcon />
          </ExtrasCluster>
        </MenuExtras>
      </MenuBar>

      <Window>
        <TitleBar>
          <Lights>
            <Light $color="radial-gradient(#7a0f0f 0 2px, #fc4b48 3px)" aria-label="Close" />
            <Light $color="#fdb32b" aria-label="Minimize" />
            <Light $color="#27c83f" aria-label="Zoom" />
          </Lights>
          <AutoSave>
            AutoSave
            <Switch>
              <input type="checkbox" />
              OFF
            </Switch>
          </AutoSave>
          <QuickButton aria-label="Home"><HomeIcon /></QuickButton>
          <QuickButton aria-label="Save"><SaveIcon /></QuickButton>
          <QuickButton aria-label="Save as"><SaveAsIcon /></QuickButton>
          <QuickButton aria-label="Undo"><UndoIcon /></QuickButton>
          <QuickButton $narrow aria-label="Undo history"><Chevron /></QuickButton>
          <QuickButton aria-label="Redo"><RedoIcon /></QuickButton>
          <QuickButton aria-label="Customize toolbar"><MoreIcon /></QuickButton>
          <DocTitle>
            <FileIcon />
            Copy of Budget Tools 2e Module 05 Cost Allocation 5.6 (Self Checking) (2015-d)
            <Chevron />
          </DocTitle>
          <QuickButton $wide aria-label="Search"><SearchIcon /></QuickButton>
          <QuickButton aria-label="Account"><PersonIcon /></QuickButton>
        </TitleBar>

        <TabRow>
          <TabList>
            {ribbonTabs.map((name) => (
              <Tab key={name} $active={name === "Home"}>{name}</Tab>
            ))}
            <Tab><BulbIcon />Tell me</Tab>
          </TabList>
          <ActionButton><ShareIcon />Share</ActionButton>
          <ActionButton><CommentIcon />Comments</ActionButton>
        </TabRow>

        <HomeRibbon />

        <FormulaBar>
          <NameBox>
            <input defaultValue="A1" aria-label="Name box" />
            <Stepper>
              <Arrow to="up" />
              <Arrow to="down" />
            </Stepper>
          </NameBox>
          <FormulaButton aria-label="Cancel">
            <Icon w={11} h={11}><path d="m1 1 9 9M10 1 1 10" strokeWidth="2.200" /></Icon>
          </FormulaButton>
          <FormulaButton aria-label="Enter">
            <Icon w={14} h={11}><path d="m1 6 4 3.500L12.500 1" strokeWidth="2.200" /></Icon>
          </FormulaButton>
          <FormulaButton $on aria-label="Insert function">fx</FormulaButton>
          <FormulaInput aria-label="Formula" />
          <Drop $on aria-label="Expand formula bar"><Arrow to="down" /></Drop>
        </FormulaBar>

        <Sheet>
          <Grid>
            <colgroup>
              <col width="23" />
              {columns.map(([name, width]) => (
                <col key={name} width={width} />
              ))}
            </colgroup>
            <thead>
              <Row $height={22}>
                <Corner>
                  <Icon w={15} h={15}><path d="M15 0v15H0z" fill="#6a6a6a" stroke="none" /></Icon>
                </Corner>
                {names.map((name, i) => (
                  <Heading key={name} scope="col" $picked={i < 9}>{name}</Heading>
                ))}
              </Row>
            </thead>
            <tbody>
              {rowHeights.map((height, i) => (
                <SheetRow key={i} number={i + 1} height={height} />
              ))}
            </tbody>
          </Grid>
        </Sheet>

        <SheetTabs>
          <TabArrows>
            <TabArrow aria-label="Previous sheet"><Arrow to="left" /></TabArrow>
            <TabArrow aria-label="Next sheet"><Arrow to="right" /></TabArrow>
          </TabArrows>
          <SheetTab $look="dim"><LockIcon color="#a8a8a8" />Questions</SheetTab>
          <SheetTab $look="open"><LockIcon color="#6a6a6a" />Exercise 5.6</SheetTab>
          <SheetTab $look="navy"><LockIcon color="#a0a0c0" />Grade Worksheet</SheetTab>
          <AddTab aria-label="Add sheet">
            <Icon w={10} h={10}><path d="M5 0v10M0 5h10" strokeWidth="1.600" /></Icon>
          </AddTab>
        </SheetTabs>

        <StatusBar>
          <StatusText>Ready</StatusText>
          <ViewButton $active aria-label="Normal view">
            <Icon w={13} h={13}><path d="M.5.500h12v12H.5zM4.500.5v12M8.500.5v12M.5 4.500h12M.5 8.500h12" /></Icon>
          </ViewButton>
          <ViewButton aria-label="Page layout view">
            <Icon w={13} h={13}><path d="M.5.500h12v12H.5zM3.500 2.500h6v8h-6zM5 4.500h3M5 6.500h3M5 8.500h3" /></Icon>
          </ViewButton>
          <ViewButton aria-label="Page break view">
            <Icon w={14} h={13}><path d="M.5.500h13v12H.5zM5.500.5v7M9.500.5v7M2 7.500h7.500" /></Icon>
          </ViewButton>
          <ZoomButton aria-label="Zoom out">
            <Icon w={8} h={2}><path d="M0 1h8" strokeWidth="2" /></Icon>
          </ZoomButton>
          <ZoomSlider type="range" min="0" max="200" defaultValue="100" aria-label="Zoom" />
          <ZoomButton aria-label="Zoom in">
            <Icon w={8} h={8}><path d="M0 4h8M4 0v8" strokeWidth="2" /></Icon>
          </ZoomButton>
          <ZoomValue>100%</ZoomValue>
        </StatusBar>
      </Window>
      <Desktop />
    </Screen>
  );
};

export default App;
